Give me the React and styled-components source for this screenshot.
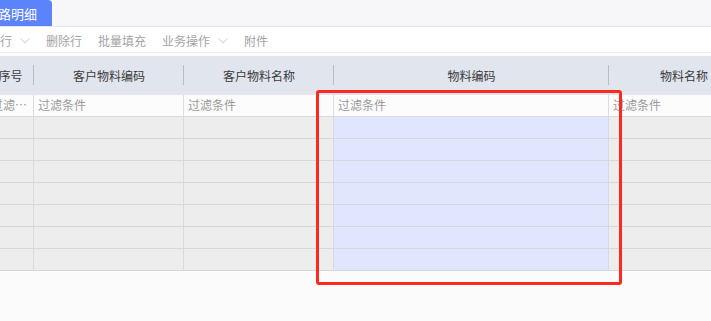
import React, { useEffect, useRef } from "react";
import styled, { createGlobalStyle } from "styled-components";

const GlobalStyle = createGlobalStyle`
  html, body {
    margin: 0;
    padding: 0;
    background: #fbfbfb;
    font-family: "Noto Sans CJK SC", "Noto Sans", sans-serif;
  }
`;

const columns = [
    { key: "seq", title: "序号", width: 47 },
    { key: "custCode", title: "客户物料编码", width: 150 },
    { key: "custName", title: "客户物料名称", width: 150 },
    { key: "code", title: "物料编码", width: 275, selected: true },
    { key: "name", title: "物料名称", width: 150 },
];

const toolbarItems = [
    { label: "新增行", menu: true },
    { label: "删除行" },
    { label: "批量填充" },
    { label: "业务操作", menu: true },
    { label: "附件" },
];

const Chevron = () => (
    <svg width="10" height="6" viewBox="0 0 10 6" fill="none">
        <path d="M0.5 0.5 L5 4.8 L9.5 0.5" stroke="#c8c8cc" strokeWidth="1" />
    </svg>
);

const App = () => {
    const gridRef = useRef();

    useEffect(() => {
        // table is scrolled a bit to the right
        if (gridRef.current) gridRef.current.scrollLeft = 13;
    }, []);

    return (
        <StPage>
            <GlobalStyle />
            <StTabBar>
                <StTab>线路明细</StTab>
            </StTabBar>

            <StToolbar>
                {toolbarItems.map((item) => (
                    <StToolItem key={item.label}>
                        {item.label}
                        {item.menu && <Chevron />}
                    </StToolItem>
                ))}
            </StToolbar>

            <StGrid ref={gridRef}>
                <StGridInner>
                    <StHeadRow>
                        {columns.map((col) => (
                            <StHeadCell key={col.key} $w={col.width}>
                                {col.title}
                            </StHeadCell>
                        ))}
                    </StHeadRow>
                    <StFilterRow>
                        {columns.map((col) => (
                            <StFilterCell key={col.key} $w={col.width}>
                                过滤条件
                            </StFilterCell>
                        ))}
                    </StFilterRow>
                    {Array.from({ length: 7 }).map((_, i) => (
                        <StDataRow key={i}>
                            {columns.map((col) => (
                                <StDataCell key={col.key} $w={col.width} $selected={col.selected} />
                            ))}
                        </StDataRow>
                    ))}
                </StGridInner>
            </StGrid>

            <StHighlight />
        </StPage>
    );
};

export default App;

const StPage = styled.div`
  position: relative;
  width: 711px;
  height: 321px;
  overflow: hidden;
  background: #fbfbfb;
`;

const StTabBar = styled.div`
  display: flex;
  height: 26px;
  background: #f7f7f9;
  border-bottom: 1px solid #e3e3ec;
`;

const StTab = styled.div`
  display: flex;
  align-items: center;
  margin-left: -30px;
  padding: 0 15px;
  height: 26px;
  background: #5b83fb;
  color: #fff;
  font-size: 13px;
  border-top-right-radius: 4px;
  white-space: nowrap;
`;

const StToolbar = styled.div`
  display: flex;
  align-items: center;
  gap: 16px;
  height: 26px;
  box-sizing: border-box;
  padding-top: 1px;
  margin-left: -24px;
  background: #fff;
  border-bottom: 1px solid #ececf2;
`;

const StToolItem = styled.div`
  display: flex;
  align-items: center;
  gap: 8px;
  font-size: 12px;
  color: #a3a3a6;
  white-space: nowrap;

  svg {
    margin-top: 1px;
  }
`;

const StGrid = styled.div`
  margin-top: 3px;
  width: 711px;
  overflow: hidden;
`;

const StGridInner = styled.div`
  width: max-content;
`;

const StRow = styled.div`
  display: flex;
`;

const StHeadRow = styled(StRow)`
  height: 38px;
  background: #e1e5ee;
`;

const StHeadCell = styled.div`
  position: relative;
  flex: none;
  width: ${(p) => p.$w}px;
  display: flex;
  align-items: center;
  justify-content: center;
  font-size: 12px;
  color: #3a3a3c;
  white-space: nowrap;

  &::after {
    content: "";
    position: absolute;
    right: 0;
    top: 9px;
    height: 20px;
    width: 1px;
    background: #b9bcc4;
  }
`;

const StFilterRow = styled(StRow)`
  height: 23px;
  background: #fcfcfc;
  border-top: 1px solid #e6e7ec;
  border-bottom: 1px solid #d8d9de;
  box-sizing: border-box;
`;

const StFilterCell = styled.div`
  flex: none;
  box-sizing: border-box;
  width: ${(p) => p.$w}px;
  padding: 0 4px;
  border-right: 1px solid #dcdde2;
  font-size: 12px;
  line-height: 20px;
  color: #9a9a9d;
  white-space: nowrap;
  overflow: hidden;
  text-overflow: ellipsis;
`;

const StDataRow = styled(StRow)`
  height: 22px;
  box-sizing: border-box;
  border-bottom: 1px solid #d6d7dc;
`;

const StDataCell = styled.div`
  flex: none;
  box-sizing: border-box;
  width: ${(p) => p.$w}px;
  background: ${(p) => (p.$selected ? "#dfe6fd" : "#ededed")};
  border-right: 1px solid #d9dadf;
`;

const StHighlight = styled.div`
  position: absolute;
  left: 316px;
  top: 90px;
  width: 306px;
  height: 195px;
  box-sizing: border-box;
  border: 3px solid #ff2a1f;
  border-radius: 3px;
  pointer-events: none;
`;
